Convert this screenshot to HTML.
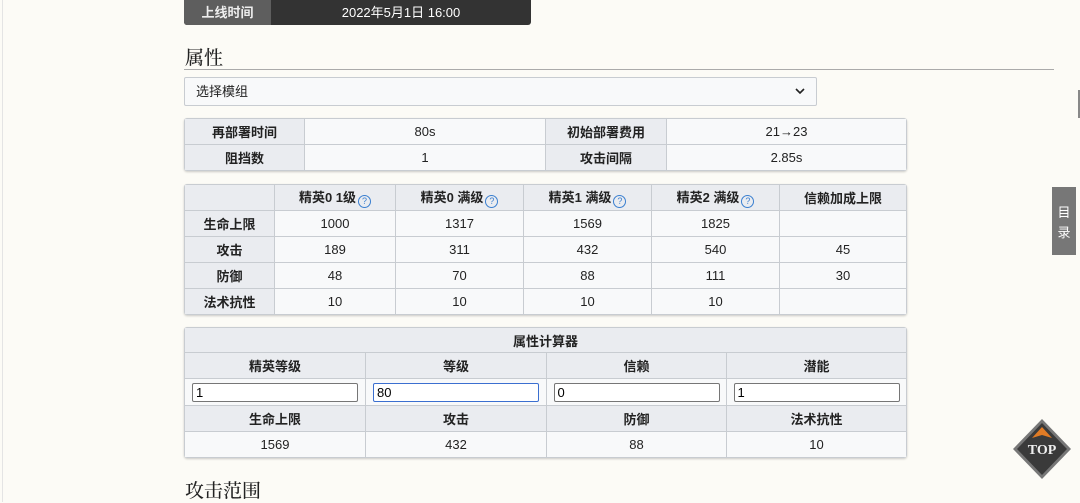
<!DOCTYPE html>
<html><head><meta charset="utf-8"><style>
*{box-sizing:border-box;margin:0;padding:0}
body{width:1080px;height:502px;overflow:hidden;background:#fcfbf6;font-family:"Liberation Sans","Noto Sans CJK SC",sans-serif;font-size:13px;color:#222;position:relative}
.abs{position:absolute}
table{border-collapse:collapse;position:absolute;left:184px;width:723px;border-radius:3px;overflow:hidden;box-shadow:0 1px 2px rgba(0,0,0,.2)}
td,th{border:1px solid #c8ccd1;text-align:center;height:26px;padding:0}
th{background:#eaecf0;font-weight:bold}
td{background:#f8f9fa}
.q{display:inline-block;width:13px;height:13px;border:1.3px solid #3a7fd0;border-radius:50%;color:#3a7fd0;font-size:9px;line-height:11px;text-align:center;font-weight:normal;vertical-align:-2px;margin-left:2px}
input{width:166px;height:19px;border:1px solid #767676;background:#fff;font:13px "Liberation Sans",sans-serif;padding-left:3px;border-radius:2px}
h2{position:absolute;font-family:"Noto Serif CJK SC","Liberation Serif",serif;font-weight:500;font-size:19px;left:185px}
</style></head><body>
<div class="abs" style="left:2px;top:0;width:1px;height:502px;background:#e4e4e4"></div>
<div class="abs" style="left:184px;top:0;width:347px;height:25px;background:#333;border-radius:0 0 3px 3px;color:#fff;font-size:13px">
<div class="abs" style="left:0;top:0;width:87px;height:25px;background:#5e5e5e;text-align:center;line-height:25px;font-weight:bold;color:#eee;border-radius:0 0 0 3px">上线时间</div>
<div class="abs" style="left:87px;top:0;width:260px;line-height:25px;text-align:center">2022年5月1日 16:00</div></div>
<h2 style="top:43px">属性</h2>
<div class="abs" style="left:184px;top:69px;width:870px;height:1px;background:#aaa"></div>
<div class="abs" style="left:184px;top:77px;width:633px;height:29px;border:1px solid #c8ccd1;border-radius:2px;background:#f8f9fa;line-height:27px;padding-left:11px">选择模组<svg style="position:absolute;right:11px;top:10px" width="10" height="7" viewBox="0 0 10 7"><path d="M1 1l4 4 4-4" stroke="#222" stroke-width="1.6" fill="none"/></svg></div>
<table style="top:118px">
<colgroup><col style="width:120px"><col style="width:241px"><col style="width:121px"><col></colgroup>
<tr><th>再部署时间</th><td>80s</td><th>初始部署费用</th><td>21→23</td></tr>
<tr><th>阻挡数</th><td>1</td><th>攻击间隔</th><td>2.85s</td></tr>
</table>
<table style="top:184px">
<colgroup><col style="width:90px"><col style="width:121px"><col style="width:128px"><col style="width:128px"><col style="width:128px"><col></colgroup>
<tr><th></th><th>精英0 1级<span class="q">?</span></th><th>精英0 满级<span class="q">?</span></th><th>精英1 满级<span class="q">?</span></th><th>精英2 满级<span class="q">?</span></th><th>信赖加成上限</th></tr>
<tr><th>生命上限</th><td>1000</td><td>1317</td><td>1569</td><td>1825</td><td></td></tr>
<tr><th>攻击</th><td>189</td><td>311</td><td>432</td><td>540</td><td>45</td></tr>
<tr><th>防御</th><td>48</td><td>70</td><td>88</td><td>111</td><td>30</td></tr>
<tr><th>法术抗性</th><td>10</td><td>10</td><td>10</td><td>10</td><td></td></tr>
</table>
<table style="top:327px">
<colgroup><col style="width:181px"><col style="width:181px"><col style="width:180px"><col></colgroup>
<tr><th colspan="4" style="height:25px">属性计算器</th></tr>
<tr><th>精英等级</th><th>等级</th><th>信赖</th><th>潜能</th></tr>
<tr><td style="height:27px"><input value="1"></td><td><input value="80" style="border:1.5px solid #3b6fd0"></td><td><input value="0"></td><td><input value="1"></td></tr>
<tr><th>生命上限</th><th>攻击</th><th>防御</th><th>法术抗性</th></tr>
<tr><td>1569</td><td>432</td><td>88</td><td>10</td></tr>
</table>
<h2 style="top:476px">攻击范围</h2>
<div class="abs" style="left:1052px;top:187px;width:24px;height:68px;background:#777;color:#fff;font-size:13px;text-align:center;padding-top:16px;line-height:20px">目<br>录</div>
<div class="abs" style="left:1078px;top:90px;width:2px;height:28px;background:#888"></div>
<svg class="abs" style="left:1012px;top:418px" width="60" height="62" viewBox="0 0 60 62">
<polygon points="30,1 59,31 30,61 1,31" fill="#777"/>
<polygon points="30,5 55,31 30,57 5,31" fill="#3a3a3a"/>
<polygon points="30,9 40,20 30,17 20,20" fill="#e07b25"/>
<text x="30" y="36" text-anchor="middle" font-family="Liberation Serif,serif" font-weight="bold" font-size="14" fill="#eee">TOP</text>
</svg>
</body></html>
